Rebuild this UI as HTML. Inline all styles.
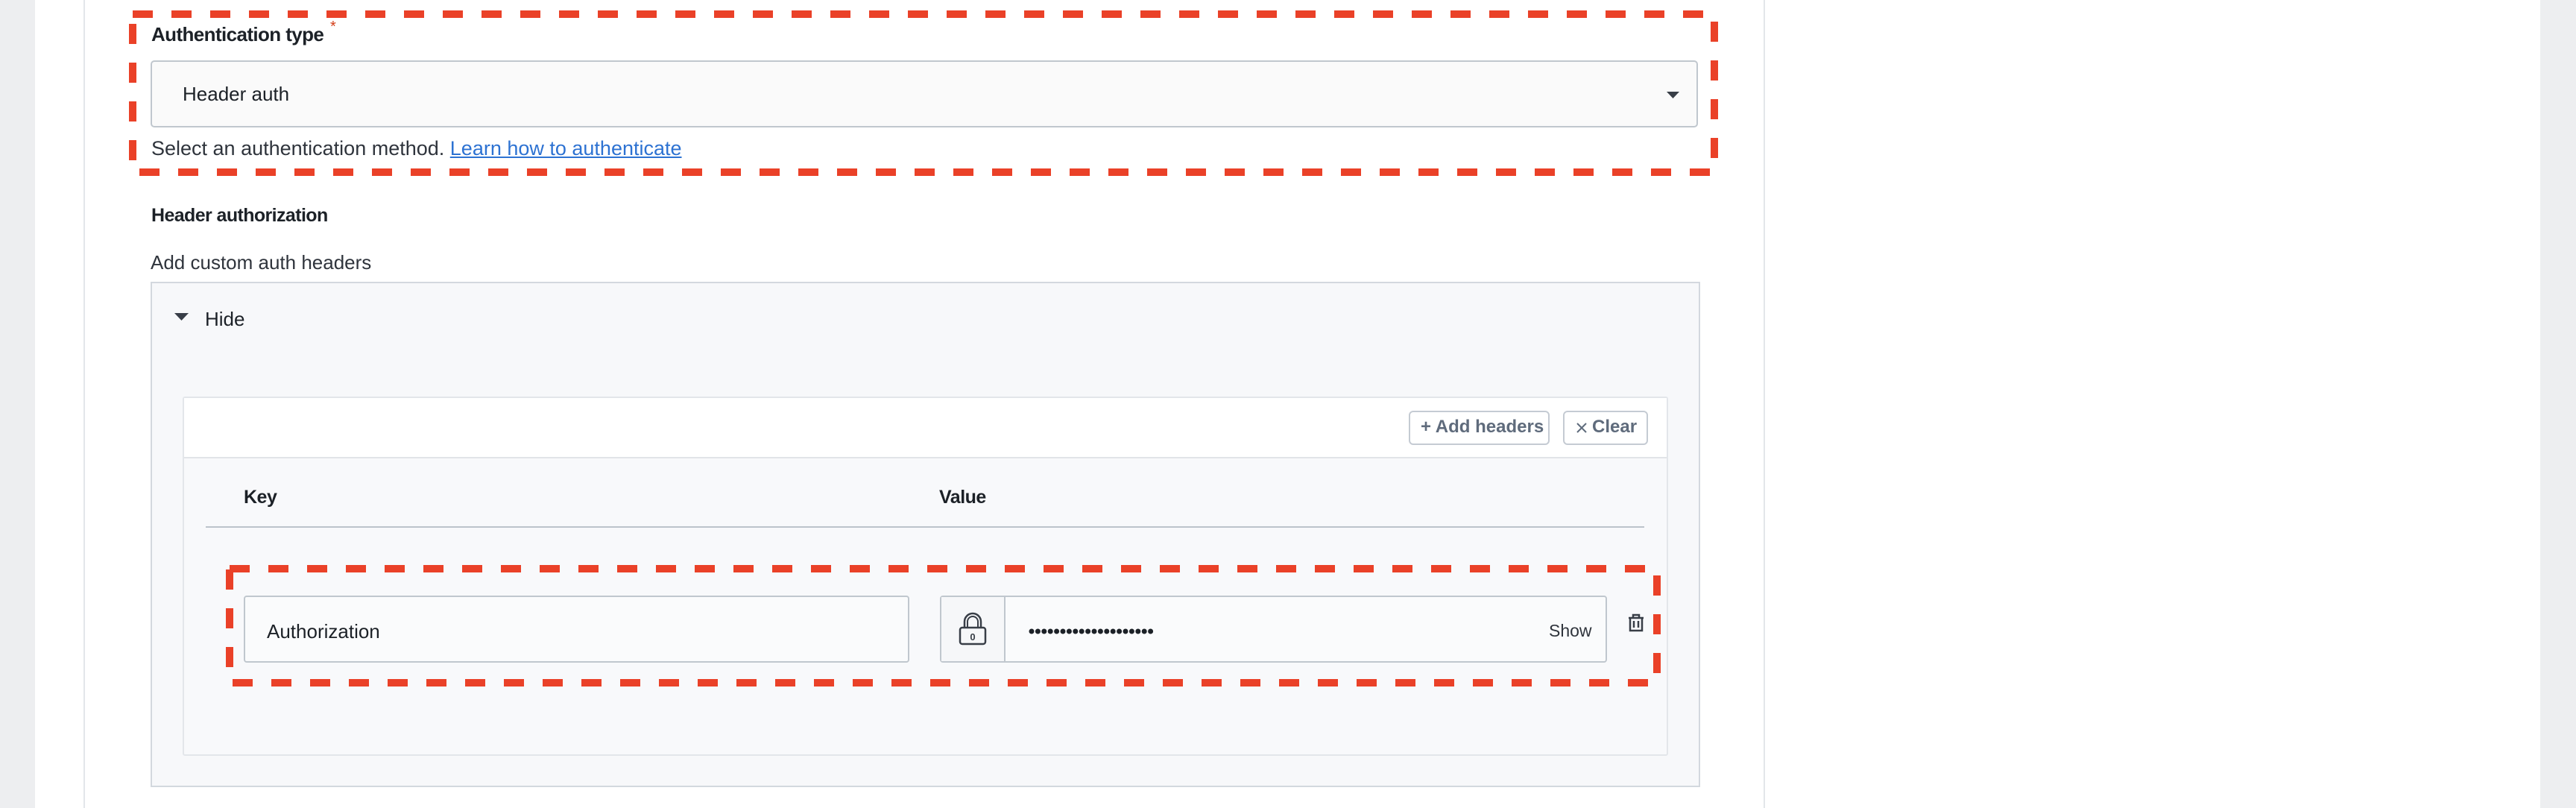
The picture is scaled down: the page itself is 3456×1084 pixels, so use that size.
<!DOCTYPE html>
<html><head><meta charset="utf-8"><style>
*{margin:0;padding:0;box-sizing:border-box}
body{width:3456px;height:1084px;background:#fff;position:relative;overflow:hidden;font-family:"Liberation Sans",sans-serif;color:#1c2127}
.a{position:absolute}
.t{position:absolute;white-space:nowrap;line-height:1}
</style></head><body>
<div class="a" style="left:0;top:0;width:47px;height:1084px;background:#edeef0"></div>
<div class="a" style="left:3408px;top:0;width:48px;height:1084px;background:#edeef0"></div>
<div class="a" style="left:112px;top:0;width:2px;height:1084px;background:#e3e6ea"></div>
<div class="a" style="left:2366px;top:0;width:2px;height:1084px;background:#e3e6ea"></div>

<div class="t" style="left:203px;top:33px;font-size:26px;font-weight:bold;letter-spacing:-0.6px">Authentication type</div>
<div class="t" style="left:443px;top:26px;font-size:20px;color:#d33d17">*</div>
<div class="a" style="left:202px;top:81px;width:2076px;height:90px;background:#fafafa;border:2px solid #c0c7ce;border-radius:5px"></div>
<div class="t" style="left:245px;top:113px;font-size:26px">Header auth</div>
<svg class="a" style="left:2236px;top:123px" width="17" height="9"><path d="M0 0H17L8.5 9Z" fill="#383e47"/></svg>
<div class="t" style="left:203px;top:186px;font-size:27px;letter-spacing:0;color:#2f343c">Select an authentication method. <span style="color:#2d72d2;text-decoration:underline">Learn how to authenticate</span></div>

<div class="t" style="left:203px;top:277px;font-size:25px;font-weight:bold;letter-spacing:-0.6px">Header authorization</div>
<div class="t" style="left:202px;top:339px;font-size:26px;color:#2f343c">Add custom auth headers</div>

<div class="a" style="left:202px;top:378px;width:2079px;height:678px;background:#f7f8fa;border:2px solid #d3d8de"></div>
<svg class="a" style="left:234px;top:420px" width="19" height="10"><path d="M0 0H19L9.5 10Z" fill="#383e47"/></svg>
<div class="t" style="left:275px;top:415px;font-size:26px">Hide</div>

<div class="a" style="left:245px;top:532px;width:1993px;height:482px;background:#f8f9fb;border:2px solid #e3e6ea;border-radius:3px"></div>
<div class="a" style="left:247px;top:534px;width:1989px;height:81px;background:#fff;border-bottom:2px solid #e1e4e8"></div>
<div class="a" style="left:1890px;top:551px;width:189px;height:46px;border:2px solid #c5cbd3;border-radius:6px;background:#fff"></div>
<div class="t" style="left:1906px;top:561px;font-size:24px;font-weight:bold;color:#5f6b7c">+ Add headers</div>
<div class="a" style="left:2097px;top:551px;width:114px;height:46px;border:2px solid #c5cbd3;border-radius:6px;background:#fff"></div>
<svg class="a" style="left:2115px;top:567px" width="14" height="14"><path d="M1 1L13 13M13 1L1 13" stroke="#5f6b7c" stroke-width="2"/></svg>
<div class="t" style="left:2136px;top:561px;font-size:24px;font-weight:bold;color:#5f6b7c">Clear</div>

<div class="t" style="left:327px;top:655px;font-size:25px;font-weight:bold;letter-spacing:-0.5px">Key</div>
<div class="t" style="left:1260px;top:655px;font-size:25px;font-weight:bold;letter-spacing:-0.5px">Value</div>
<div class="a" style="left:276px;top:706px;width:1930px;height:2px;background:#bcc3cb"></div>

<div class="a" style="left:327px;top:799px;width:893px;height:90px;background:#fafbfc;border:2px solid #c0c7ce;border-radius:4px"></div>
<div class="t" style="left:358px;top:834px;font-size:26px">Authorization</div>
<div class="a" style="left:1261px;top:799px;width:895px;height:90px;background:#fafbfc;border:2px solid #c0c7ce;border-radius:4px"></div>
<div class="a" style="left:1263px;top:801px;width:86px;height:86px;background:#f6f7f9;border-right:2px solid #c0c7ce"></div>
<svg class="a" style="left:1286px;top:821px" width="38" height="45" viewBox="0 0 38 45"><path d="M8 21V13a11 11 0 0 1 22 0v8" fill="none" stroke="#383e47" stroke-width="2.5"/><path d="M12 21V13a7 7 0 0 1 14 0v8" fill="none" stroke="#383e47" stroke-width="2"/><rect x="2" y="21" width="34" height="22" rx="3" fill="none" stroke="#383e47" stroke-width="2.5"/><text x="19" y="38" font-size="13" font-weight="bold" text-anchor="middle" fill="#383e47" font-family="Liberation Sans">0</text></svg>
<svg class="a" style="left:1380px;top:840px" width="170" height="14" fill="#1c2127">
<circle cx="4" cy="7" r="3.5"/><circle cx="12.4" cy="7" r="3.5"/><circle cx="20.8" cy="7" r="3.5"/><circle cx="29.2" cy="7" r="3.5"/><circle cx="37.6" cy="7" r="3.5"/><circle cx="46" cy="7" r="3.5"/><circle cx="54.4" cy="7" r="3.5"/><circle cx="62.8" cy="7" r="3.5"/><circle cx="71.2" cy="7" r="3.5"/><circle cx="79.6" cy="7" r="3.5"/><circle cx="88" cy="7" r="3.5"/><circle cx="96.4" cy="7" r="3.5"/><circle cx="104.8" cy="7" r="3.5"/><circle cx="113.2" cy="7" r="3.5"/><circle cx="121.6" cy="7" r="3.5"/><circle cx="130" cy="7" r="3.5"/><circle cx="138.4" cy="7" r="3.5"/><circle cx="146.8" cy="7" r="3.5"/><circle cx="155.2" cy="7" r="3.5"/><circle cx="163.6" cy="7" r="3.5"/>
</svg>
<div class="t" style="left:2078px;top:835px;font-size:23px;color:#2f343c">Show</div>
<svg class="a" style="left:2184px;top:823px" width="22" height="25" viewBox="0 0 22 25"><path d="M1 6H21M7 6V2H15V6M3 6V23H19V6M8 10V19M14 10V19" fill="none" stroke="#383e47" stroke-width="2.5"/></svg>

<svg class="a" style="left:0;top:0" width="3456" height="1084">
<rect x="178" y="19" width="2122" height="212" fill="none" stroke="#ea4128" stroke-width="10" stroke-dasharray="27 25"/>
<rect x="308" y="763" width="1915" height="153" fill="none" stroke="#ea4128" stroke-width="10" stroke-dasharray="27 25"/>
</svg>
</body></html>
